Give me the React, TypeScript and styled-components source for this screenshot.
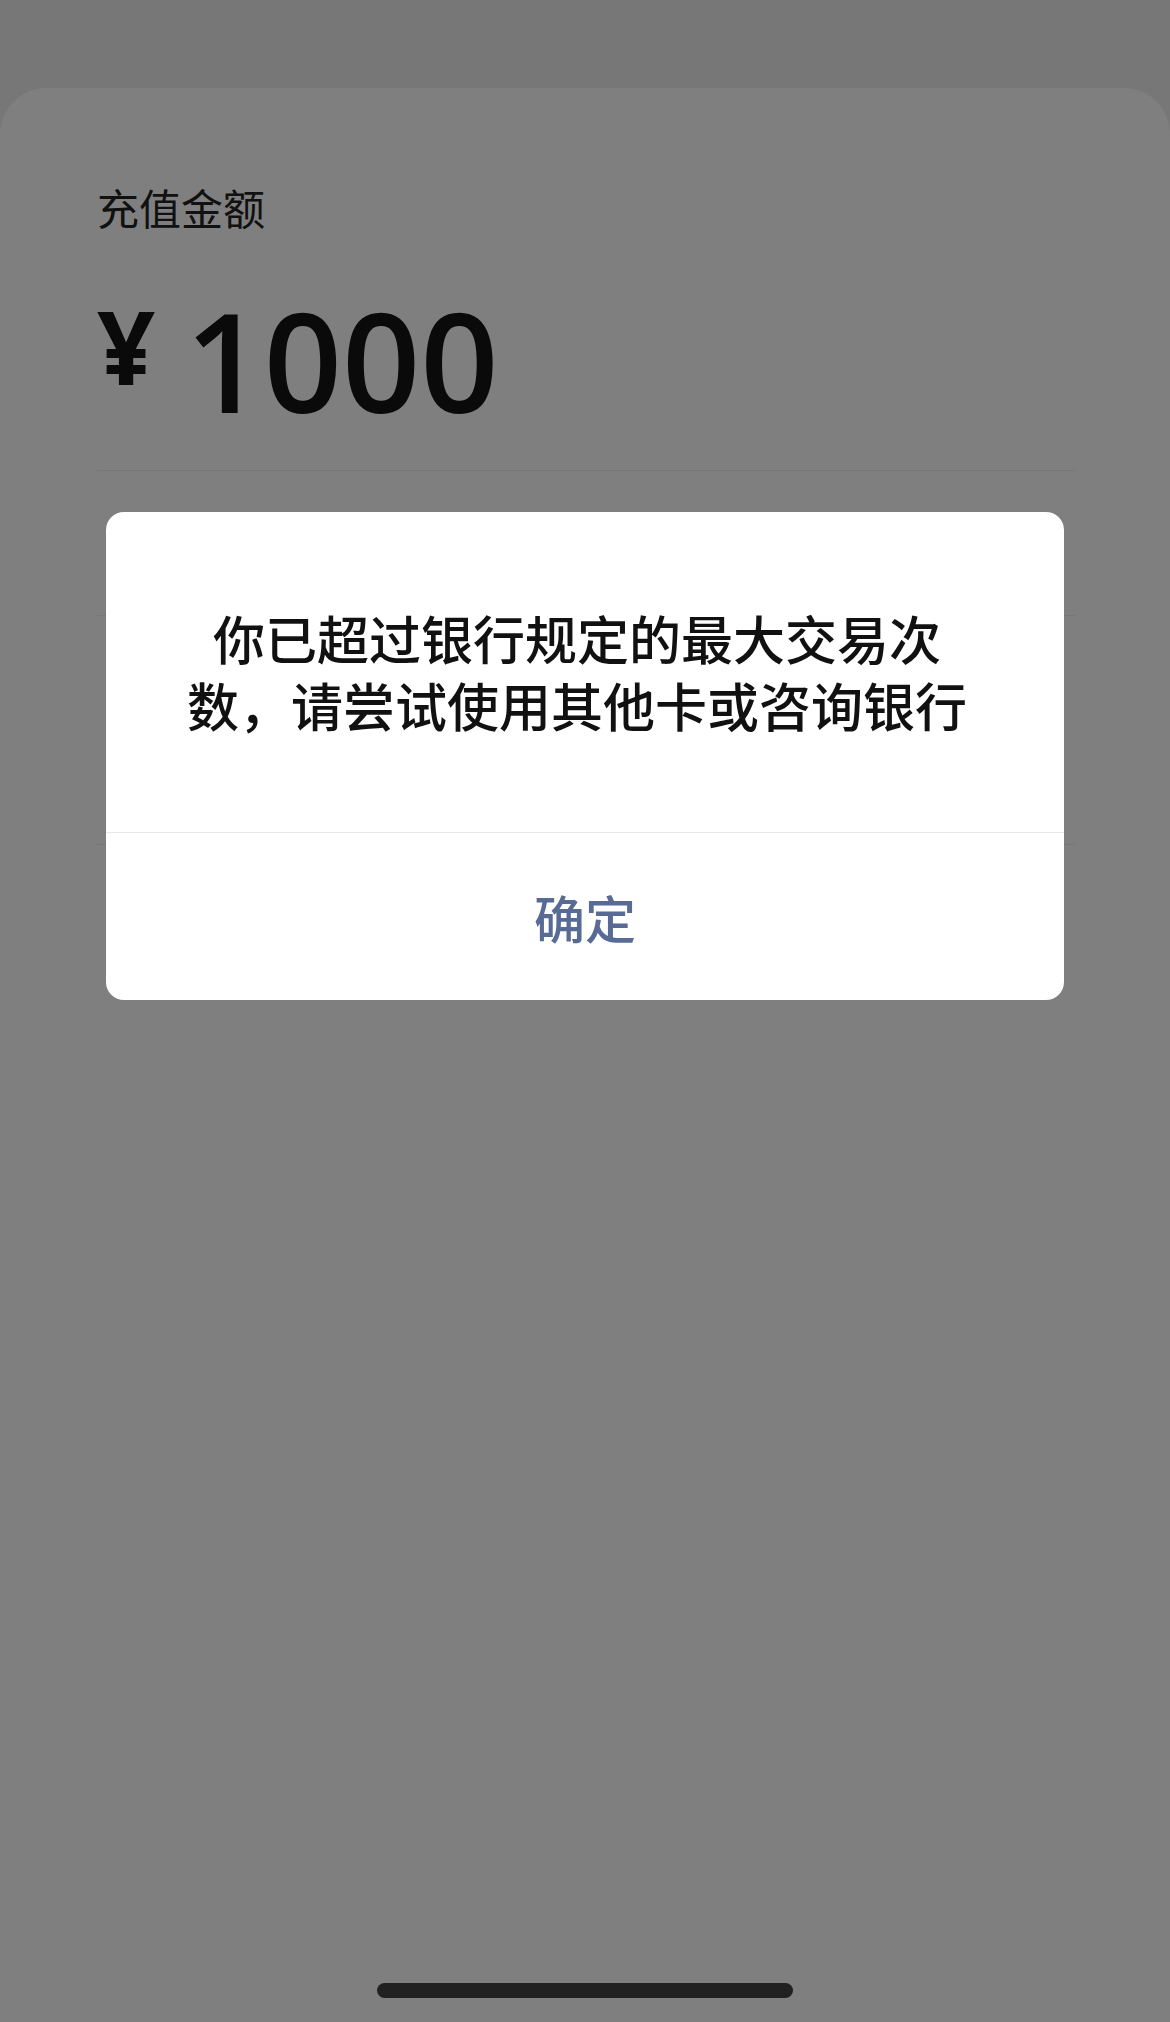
import React from "react";
import styled, { createGlobalStyle } from "styled-components";

const GlobalStyle = createGlobalStyle`
  html, body {
    margin: 0;
    padding: 0;
    background: #eeeeee;
    font-family: "Noto Sans CJK SC", "Noto Sans", sans-serif;
  }
`;

const Page = styled.div`
  min-height: 100vh;
  display: flex;
  flex-direction: column;
  background: #eeeeee;
`;

const Sheet = styled.main`
  flex: 1;
  margin-top: 88px;
  padding: 90px 95px 0 97px;
  background: #ffffff;
  border-radius: 46px 46px 0 0;
`;

const Label = styled.div`
  font-size: 42px;
  line-height: 58px;
  color: #222222;
`;

const AmountRow = styled.div`
  display: flex;
  align-items: flex-start;
  margin-top: 56px;
  padding-bottom: 41px;
  border-bottom: 1px solid #eeeeee;
  font-family: "Open Sans", "Noto Sans", sans-serif;
  color: #141414;
`;

const Currency = styled.span`
  font-size: 102px;
  font-weight: 700;
  line-height: 1;
  margin-top: 3px;
  margin-right: 30px;
`;

const Digits = styled.span`
  font-size: 137px;
  font-weight: 600;
  line-height: 1;
`;

const Row = styled.div<{ $height: number }>`
  height: ${(p) => p.$height}px;
  border-bottom: 1px solid #eeeeee;
`;

const Overlay = styled.div`
  position: fixed;
  inset: 0;
  display: flex;
  flex-direction: column;
  align-items: center;
  padding-top: 512px;
  background: rgba(0, 0, 0, 0.5);
`;

const Dialog = styled.div`
  width: 958px;
  background: #ffffff;
  border-radius: 18px;
  overflow: hidden;
`;

const Message = styled.div`
  padding: 92px 88px 94px 72px;
  font-size: 52px;
  line-height: 67px;
  font-weight: 500;
  color: #111111;
  text-align: center;
  border-bottom: 1px solid #e6e6e6;
`;

const ConfirmButton = styled.button`
  display: block;
  width: 100%;
  height: 167px;
  padding: 0;
  border: none;
  background: transparent;
  font-family: inherit;
  font-size: 51px;
  font-weight: 500;
  color: #576b95;
  cursor: pointer;
`;

const Spacer = styled.div`
  flex: 1;
`;

const HomeIndicator = styled.div`
  width: 416px;
  height: 15px;
  margin-bottom: 24px;
  border-radius: 8px;
  background: #212121;
`;

const App = () => {
  return (
    <Page>
      <GlobalStyle />
      <Sheet>
        <Label>充值金额</Label>
        <AmountRow>
          <Currency>¥</Currency>
          <Digits>1000</Digits>
        </AmountRow>
        <Row $height={144} />
        <Row $height={228} />
      </Sheet>
      <Overlay>
        <Dialog>
          <Message>你已超过银行规定的最大交易次数，请尝试使用其他卡或咨询银行</Message>
          <ConfirmButton>确定</ConfirmButton>
        </Dialog>
        <Spacer />
        <HomeIndicator />
      </Overlay>
    </Page>
  );
};

export default App;
